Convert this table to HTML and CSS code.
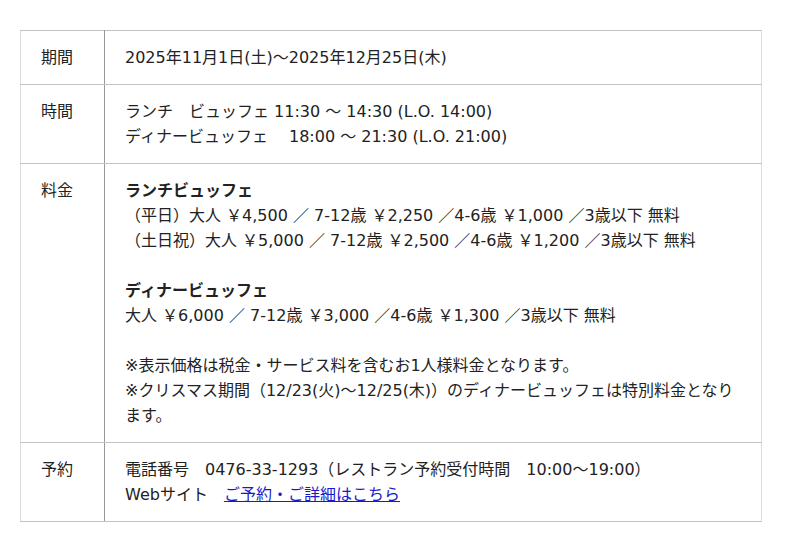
FILE: index.html
```html
<!DOCTYPE html>
<html lang="ja">
<head>
<meta charset="utf-8">
<link rel="stylesheet" href="styles.css">
</head>
<body>
<table class="info">
  <tr>
    <th>期間</th>
    <td>2025年11月1日(土)～2025年12月25日(木)</td>
  </tr>
  <tr>
    <th>時間</th>
    <td>ランチ　ビュッフェ 11:30 ～ 14:30 (L.O. 14:00)<br>ディナービュッフェ　 18:00 ～ 21:30 (L.O. 21:00)</td>
  </tr>
  <tr>
    <th>料金</th>
    <td><strong>ランチビュッフェ</strong><br>（平日）大人 ￥4,500 ／ 7-12歳 ￥2,250 ／4-6歳 ￥1,000 ／3歳以下 無料<br>（土日祝）大人 ￥5,000 ／ 7-12歳 ￥2,500 ／4-6歳 ￥1,200 ／3歳以下 無料<br><br><strong>ディナービュッフェ</strong><br>大人 ￥6,000 ／ 7-12歳 ￥3,000 ／4-6歳 ￥1,300 ／3歳以下 無料<br><br>※表示価格は税金・サービス料を含むお1人様料金となります。<br>※クリスマス期間（12/23(火)～12/25(木)）のディナービュッフェは特別料金となります。</td>
  </tr>
  <tr>
    <th>予約</th>
    <td>電話番号　0476-33-1293（レストラン予約受付時間　10:00～19:00）<br>Webサイト　<a href="#">ご予約・ご詳細はこちら</a></td>
  </tr>
</table>
</body>
</html>
```
FILE: styles.css
```css
html, body {
  margin: 0;
  padding: 0;
  background: #fff;
}
body {
  font-family: "DejaVu Sans", "Noto Sans CJK JP", sans-serif;
  font-size: 16px;
  line-height: 25px;
  color: #222;
}
.info {
  border-collapse: collapse;
  margin: 30px 0 0 20px;
  width: 742px;
  border: 1px solid #ddd;
}
.info th,
.info td {
  padding: 14px 20px;
  text-align: left;
  vertical-align: top;
  border-top: 1px solid #c4c4c4;
  border-bottom: 1px solid #c4c4c4;
}
.info th {
  font-weight: normal;
  width: 43px;
  white-space: nowrap;
  border-right: 1px solid #999;
}
.info strong {
  font-weight: bold;
}
.info a {
  color: #1a1acc;
  text-decoration: underline;
}
```
